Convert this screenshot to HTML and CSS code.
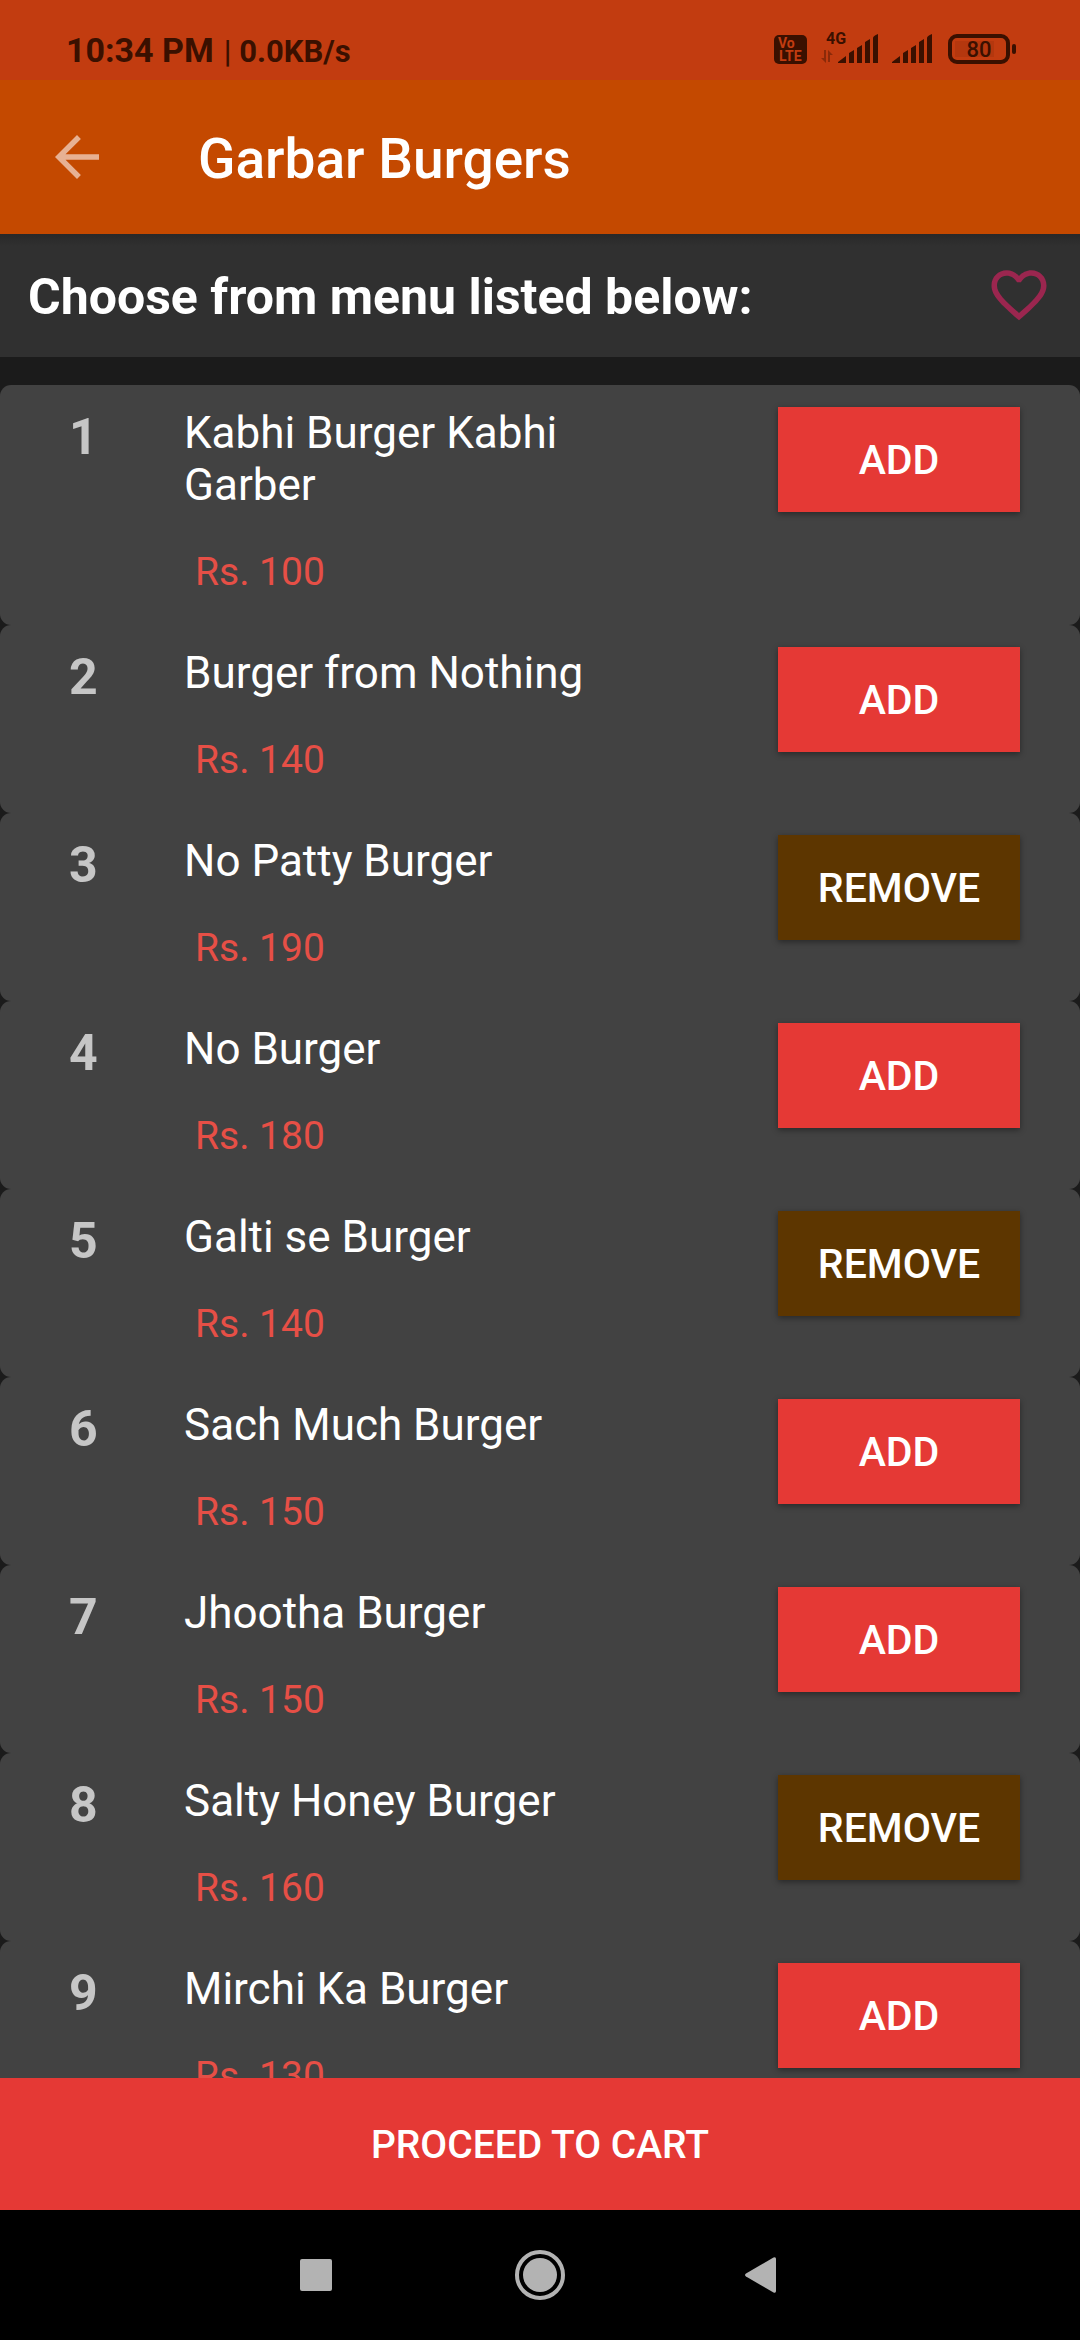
FILE: index.html
```html
<!DOCTYPE html>
<html lang="en">
<head>
<meta charset="utf-8">
<meta name="viewport" content="width=device-width, initial-scale=1">
<title>Garbar Burgers</title>
<link rel="stylesheet" href="styles.css">
</head>
<body>
<div class="status-bar">
  <p class="status-text"><span class="clock">10:34 PM</span><span class="speed"><span class="divider">|</span> 0.0KB/s</span></p>
  <div class="status-icons">
    <svg class="icon-volte" viewBox="0 0 33 29" aria-hidden="true">
      <rect width="33" height="29" rx="5"/>
      <text x="4" y="13" class="volte-text">Vo</text>
      <text x="5" y="26" class="volte-text">LTE</text>
    </svg>
    <svg class="icon-network" viewBox="0 0 58 34" aria-hidden="true">
      <text x="5" y="14" class="network-text">4G</text>
      <path class="faint" d="M3 20h2v13L0 28h3zM7 20l5 5H9v7H7z"/>
      <path d="M17 33v-1l8-6v7zM28 33V23l5-3v13zM36 33V18l5-3v18zM44 33V12l5-3v24zM52 33V8q0-2 5-4v29z"/>
    </svg>
    <svg class="icon-signal" viewBox="0 0 41 30" aria-hidden="true">
      <path d="M0 29v-1l8-6v7zM11 29V19l5-3v13zM19 29V14l5-3v18zM27 29V8l5-3v24zM35 29V4q0-2 5-4v29z"/>
    </svg>
    <svg class="icon-battery" viewBox="0 0 69 30" aria-hidden="true">
      <rect class="charge" x="7" y="7" width="39" height="16"/>
      <rect class="case" x="2" y="2" width="58" height="26" rx="7"/>
      <rect x="64" y="10" width="4" height="10" rx="2"/>
      <text x="31" y="23" class="battery-text">80</text>
    </svg>
  </div>
</div>

<header class="app-bar">
  <button class="icon-button" type="button" aria-label="Back">
    <svg viewBox="0 0 24 24"><path d="M20 11H7.83l5.59-5.59L12 4l-8 8 8 8 1.41-1.41L7.83 13H20z"/></svg>
  </button>
  <h1 class="app-title">Garbar Burgers</h1>
</header>

<section class="menu-heading">
  <h2 class="menu-title">Choose from menu listed below:</h2>
  <button class="icon-button favourite" type="button" aria-label="Add to favourites">
    <svg viewBox="0 0 24 24"><path d="M16.5 3c-1.74 0-3.41.81-4.5 2.09C10.91 3.81 9.24 3 7.5 3 4.42 3 2 5.42 2 8.5c0 3.78 3.4 6.86 10 12.7C18.6 15.36 22 12.28 22 8.5 22 5.42 19.58 3 16.5 3zM12 18.5C7.14 14.24 4 11.39 4 8.5 4 6.5 5.5 5 7.5 5c1.54 0 3.04.99 3.8 2.36h1.4C13.46 5.99 14.96 5 16.5 5c2 0 3.5 1.5 3.5 3.5 0 2.89-3.14 5.74-8 10z"/></svg>
  </button>
</section>

<main class="menu">
  <ol class="menu-list">
    <li class="item"><span class="number">1</span><div class="details"><h3 class="name">Kabhi Burger Kabhi Garber</h3><p class="price">Rs. 100</p></div><button class="action" type="button">ADD</button></li>
    <li class="item"><span class="number">2</span><div class="details"><h3 class="name">Burger from Nothing</h3><p class="price">Rs. 140</p></div><button class="action" type="button">ADD</button></li>
    <li class="item"><span class="number">3</span><div class="details"><h3 class="name">No Patty Burger</h3><p class="price">Rs. 190</p></div><button class="action remove" type="button">REMOVE</button></li>
    <li class="item"><span class="number">4</span><div class="details"><h3 class="name">No Burger</h3><p class="price">Rs. 180</p></div><button class="action" type="button">ADD</button></li>
    <li class="item"><span class="number">5</span><div class="details"><h3 class="name">Galti se Burger</h3><p class="price">Rs. 140</p></div><button class="action remove" type="button">REMOVE</button></li>
    <li class="item"><span class="number">6</span><div class="details"><h3 class="name">Sach Much Burger</h3><p class="price">Rs. 150</p></div><button class="action" type="button">ADD</button></li>
    <li class="item"><span class="number">7</span><div class="details"><h3 class="name">Jhootha Burger</h3><p class="price">Rs. 150</p></div><button class="action" type="button">ADD</button></li>
    <li class="item"><span class="number">8</span><div class="details"><h3 class="name">Salty Honey Burger</h3><p class="price">Rs. 160</p></div><button class="action remove" type="button">REMOVE</button></li>
    <li class="item"><span class="number">9</span><div class="details"><h3 class="name">Mirchi Ka Burger</h3><p class="price">Rs. 130</p></div><button class="action" type="button">ADD</button></li>
  </ol>
</main>

<button class="proceed" type="button">PROCEED TO CART</button>

<nav class="system-nav" aria-label="System">
  <button class="nav-button" type="button" aria-label="Recent apps"><svg viewBox="0 0 52 52"><rect x="10" y="10" width="32" height="32" rx="2"/></svg></button>
  <button class="nav-button" type="button" aria-label="Home"><svg viewBox="0 0 52 52"><circle class="ring" cx="26" cy="26" r="23"/><circle cx="26" cy="26" r="17"/></svg></button>
  <button class="nav-button" type="button" aria-label="Back"><svg viewBox="0 0 52 52"><path d="M8 24.5L35.5 8.5Q38 7.5 38 10V42Q38 44.5 35.5 43.5L8 27.5Q6 26 8 24.5z"/></svg></button>
</nav>
</body>
</html>
```

FILE: styles.css
```css
* {
  box-sizing: border-box;
  margin: 0;
  padding: 0;
}

body {
  display: flex;
  flex-direction: column;
  height: 100vh;
  overflow: hidden;
  background: #1b1b1b;
  color: #fff;
  font-family: Roboto, "Noto Sans", sans-serif;
}

button {
  border: 0;
  background: none;
  color: inherit;
  font: inherit;
  cursor: pointer;
}

svg {
  display: block;
  fill: currentColor;
}

/* Status bar */

.status-bar {
  display: flex;
  flex: none;
  align-items: flex-start;
  justify-content: space-between;
  height: 80px;
  padding: 30px 63px 0 66px;
  background: #c23c10;
  color: #3a1000;
}

.status-text {
  display: flex;
  align-items: baseline;
  gap: 10px;
  font-weight: 700;
  line-height: 40px;
}

.clock {
  font-size: 34px;
}

.speed {
  font-size: 31px;
}

.divider {
  font-weight: 500;
}

.status-icons {
  display: flex;
  align-items: flex-end;
  height: 34px;
}

.icon-volte {
  width: 33px;
  height: 29px;
  margin-right: 14px;
}

.volte-text {
  fill: #c23c10;
  font-size: 14px;
  font-weight: 700;
}

.icon-network {
  width: 58px;
  height: 34px;
  margin-right: 13px;
}

.network-text {
  font-size: 16px;
  font-weight: 700;
}

.faint {
  opacity: 0.4;
}

.icon-signal {
  width: 41px;
  height: 30px;
  margin-right: 15px;
}

.icon-battery {
  width: 69px;
  height: 30px;
}

.case {
  fill: none;
  stroke: currentColor;
  stroke-width: 4;
}

.charge {
  opacity: 0.1;
}

.battery-text {
  font-size: 22px;
  font-weight: 500;
  text-anchor: middle;
}

/* App bar */

.app-bar {
  display: flex;
  flex: none;
  align-items: center;
  gap: 88px;
  height: 154px;
  padding: 0 44px;
  background: #c44900;
}

.icon-button {
  flex: none;
  width: 66px;
  height: 66px;
  color: #e7b193;
}

.app-title {
  padding-top: 4px;
  font-size: 55px;
  font-weight: 500;
  line-height: 64px;
}

/* Menu heading */

.menu-heading {
  display: flex;
  flex: none;
  align-items: flex-start;
  justify-content: space-between;
  padding: 28px 28px 25px;
  background: linear-gradient(#282828, #303030 12px);
}

.menu-title {
  font-size: 50px;
  font-weight: 700;
  line-height: 70px;
}

.favourite {
  color: #9b264f;
}

/* Menu */

.menu {
  flex: 1;
  min-height: 0;
  padding-top: 28px;
  overflow: hidden;
}

.menu-list {
  list-style: none;
}

.item {
  display: flex;
  align-items: flex-start;
  padding: 22px 60px 30px 69px;
  border-radius: 11px;
  background: #424242;
}

.number {
  flex: none;
  width: 115px;
  color: #c6c6c6;
  font-size: 50px;
  font-weight: 700;
  line-height: 60px;
}

.details {
  flex: 1;
  padding-right: 110px;
}

.name {
  margin-bottom: 38px;
  font-size: 44px;
  font-weight: 400;
  line-height: 52px;
}

.price {
  padding-left: 11px;
  color: #e64f46;
  font-size: 39px;
  line-height: 46px;
}

.action {
  flex: none;
  width: 242px;
  height: 105px;
  background: #e53935;
  box-shadow: 0 2px 6px rgba(0, 0, 0, 0.4);
  font-size: 41px;
  font-weight: 500;
}

.remove {
  background: #5d3600;
}

.proceed {
  flex: none;
  height: 132px;
  padding-top: 2px;
  background: #e53935;
  font-size: 39px;
  font-weight: 500;
}

/* System navigation */

.system-nav {
  display: flex;
  flex: none;
  align-items: center;
  justify-content: center;
  gap: 172px;
  height: 130px;
  background: #000;
}

.nav-button {
  width: 52px;
  height: 52px;
  color: #b3b3b3;
}

.ring {
  fill: none;
  stroke: currentColor;
  stroke-width: 4;
}
```
